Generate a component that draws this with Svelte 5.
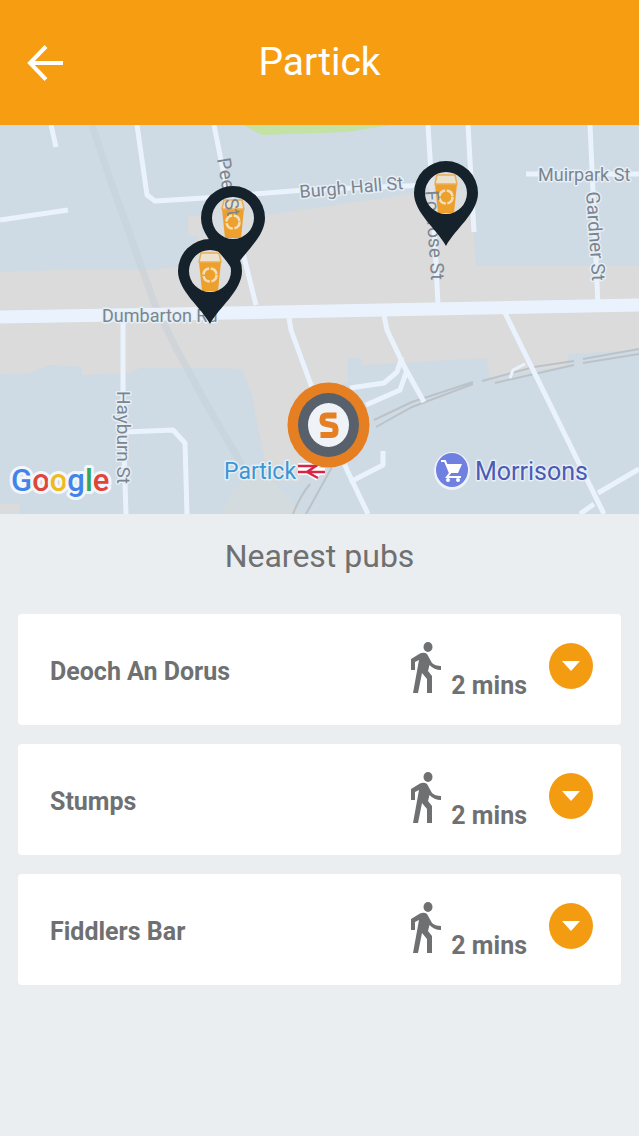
<script>
    const station = 'Partick';

    const pubs = [
        { name: 'Deoch An Dorus', walk: '2 mins' },
        { name: 'Stumps', walk: '2 mins' },
        { name: 'Fiddlers Bar', walk: '2 mins' }
    ];

    const pins = [
        { id: 'dorus', x: 233, y: 218 },
        { id: 'stumps', x: 210, y: 271 },
        { id: 'fiddlers', x: 446, y: 193 }
    ];

    let open = $state(-1);

    function toggle(i) {
        open = open === i ? -1 : i;
    }
</script>

<header>
    <button class="back" type="button" aria-label="Back">
        <svg viewBox="0 0 36 36" aria-hidden="true">
            <path d="M19 1.500L3 18l16 16.500M3 18h33" />
        </svg>
    </button>
    <h1>{station}</h1>
</header>

<main>
    <svg class="map" viewBox="0 125 639 389" preserveAspectRatio="xMidYMid slice" role="img" aria-label="Map of {station}">
        <rect y="125" width="639" height="389" fill="#cedae4" />

        <!-- built up areas -->
        <g fill="#dadbda">
            <path d="M0 272l85-3 65 1 30-3V260l20-25 30-15 70-10 110-16 54-4 10 40 2 36h163v55H0z" />
            <path d="M188 216h14v20h-14z" />
            <path d="M0 310l639-8v48l-70 4-4 12-75 12-4-20-138 8v16l-20 9-14 44-14 46h-30l-12-51-6-35-10-26-42-1-60 0-10 5-48 2v-8l-32-2-20 8-40 2-8 10-22 4H0z" />
            <path d="M0 504h20v10H0z" />
        </g>
        <path d="M348 358h13l1 18h-14z" fill="#cedae4" />
        <path d="M222 514l14-28 24-18 44 46z" fill="#d3dbde" />
        <path d="M243 125h148l-45 7-84 3z" fill="#c4e2a4" />

        <!-- underground line -->
        <path class="tunnel" d="M92 125l20 60 18 50 25 70 22 45 30 55 35 60" />

        <!-- railway -->
        <g class="rail">
            <path d="M376 427l36-20 61-23M374 420l38-18 61-20M482 381l52-14 40-6M495 383l79-18M583 363l56-9M583 359l56-10" />
            <path d="M293 514q7-18 17-30M306 514l26-47" />
        </g>

        <g class="road">
            <path d="M51 125l5 22M0 220l68-10M137 125l10 70 8 6 50-3 100-8 125-5" />
            <path d="M214 125l12 60 30 120" />
            <path d="M428 125l5 80 5 100M468 125l6 107M590 125l8 180" />
            <path d="M526 174h113" />
            <path d="M123 320v100l3 94M126 432l47-2 12 13 2 71" />
            <path d="M289 318l2 12 20 55 36 85 21 44" />
            <path d="M384 315l3 15 17 36 20 36M350 388l34-5 13-11 5-15M366 405l34-15 7-20" />
            <path d="M350 482l33-17v-14M505 313l99 201M598 493l41-24M580 514l14-10" />
            <path d="M525 364l-12 6-3 8" stroke-width="3" />
        </g>
        <path d="M0 317L230 313 639 305" stroke="#eaf3fd" stroke-width="13" fill="none" />

        {#each pins as pin (pin.id)}
        <g transform="translate({pin.x} {pin.y})">
            <circle r="22" fill="#dddedf" opacity="0.7" />
            <g opacity="0.9">
                <path d="M-11-9h22l-3 29h-16z" fill="#f09a1a" />
                <path d="M-9-18h18l2 9h-22z" fill="#eee3cd" stroke="#f0ab45" stroke-width="1.500" />
                <circle cy="4" r="6.500" fill="none" stroke="#f6dfb8" stroke-width="2.500" stroke-dasharray="8.500 1.700" />
            </g>
        </g>
        {/each}

        <!-- names run across the pin windows, under the pin bodies -->
        <g class="street">
            <text x="102" y="322">Dumbarton Rd</text>
            <text transform="translate(300 198) rotate(-5)">Burgh Hall St</text>
            <text x="538" y="181">Muirpark St</text>
        </g>
        <g class="street down">
            <text transform="translate(586 192) rotate(86)">Gardner St</text>
            <text transform="translate(117 391) rotate(90)">Hayburn St</text>
        </g>
        <g class="street down bare">
            <text transform="translate(217 159) rotate(80)">Peel St</text>
            <text transform="translate(425 191) rotate(86)">Foxrose St</text>
        </g>

        {#each pins as pin (pin.id)}
        <path
            transform="translate({pin.x} {pin.y})"
            d="M0 53C-9 36-32 20-32 0a32 32 0 0 1 64 0C32 20 9 36 0 53zM0-21a21 21 0 1 0 0 42 21 21 0 0 0 0-42z"
            fill="#15222b"
            fill-rule="evenodd" />
        {/each}

        <g class="poi">
            <text x="224" y="479" font-size="23" fill="#3b97d3">{station}</text>
            <text x="475" y="480" font-size="25" fill="#4a5bb5">Morrisons</text>
        </g>

        <path d="M298 466h18l-8 5h17M298 472h27M308 472l10 6" stroke="#fff" stroke-width="6" fill="none" />
        <path d="M298 466h18l-9 6 11 6M298 472h27" stroke="#d92445" stroke-width="2.500" fill="none" />

        <ellipse cx="328.500" cy="425" rx="41" ry="42.500" fill="#e67e22" />
        <ellipse cx="328.500" cy="425" rx="30.500" ry="32" fill="#57606b" />
        <ellipse cx="328.500" cy="425" rx="20.500" ry="22" fill="#eff3f8" />
        <path d="M336.500 415.500h-10q-4 0-4 4v1q0 3 4 3.500l5 1q4 .500 4 4v2q0 4-4 4h-11" fill="none" stroke="#e67e22" stroke-width="6" />

        <ellipse cx="452" cy="471" rx="18" ry="19" fill="#eef3fb" />
        <ellipse cx="452" cy="470" rx="16" ry="17" fill="#6f80e0" />
        <path d="M441 461h4l5 12-3 4h14" fill="none" stroke="#fff" stroke-width="2" />
        <path d="M446 464h16l-4 9h-8z" fill="#fff" />
        <circle cx="448" cy="480" r="2" fill="#fff" />
        <circle cx="458" cy="480" r="2" fill="#fff" />

        <text class="brand" x="11" y="491"><tspan fill="#4285e8">G</tspan><tspan fill="#e0453a">o</tspan><tspan fill="#efb920">o</tspan><tspan fill="#4285e8">g</tspan><tspan fill="#38a455">l</tspan><tspan fill="#e0453a">e</tspan></text>
    </svg>

    <h2>Nearest pubs</h2>

    <ul>
        {#each pubs as pub, i (pub.name)}
        <li>
            <span class="name">{pub.name}</span>
            <svg class="walker" viewBox="0 0 30 52" aria-hidden="true">
                <ellipse cx="17" cy="5" rx="4.500" ry="5" />
                <path d="M9 11.500Q13 10 16 12L21 21Q24 24 30 24v4Q23 28 18.500 23L17 29l4 5v17h-5V37l-5-6-4 20H2l6-33-4 2v8H0V17z" />
            </svg>
            <span class="time">{pub.walk}</span>
            <button
                class="toggle"
                type="button"
                aria-label="Show {pub.name}"
                aria-expanded={open === i}
                onclick={() => toggle(i)}>
                <svg viewBox="0 0 18 10" aria-hidden="true"><path d="M0 0h18L9 10z" /></svg>
            </button>
        </li>
        {/each}
    </ul>
</main>

<style>
    :global(body) {
        margin: 0;
        background-color: #ebeef0;
        color: #6f7072;
        font-family: Roboto, sans-serif;
    }

    header {
        display: grid;
        grid-template-columns: 36px 1fr 36px;
        align-items: center;
        padding: 32px 27px;
        background-color: #f79d12;
        color: #fff;
    }

    h1 {
        margin: 0;
        font-size: 39px;
        font-weight: 400;
        line-height: 61px;
        text-align: center;
    }

    button {
        padding: 0;
        border: none;
        cursor: pointer;
    }

    .back {
        height: 36px;
        background: none;
    }

    .back svg {
        display: block;
        width: 36px;
        height: 36px;
        fill: none;
        stroke: #fff;
        stroke-width: 4;
    }

    .map {
        display: block;
        width: 100%;
    }

    .road {
        fill: none;
        stroke: #eaf3fd;
        stroke-width: 5;
        stroke-linejoin: round;
    }

    .rail {
        fill: none;
        stroke: #bcc3c8;
        stroke-width: 2;
    }

    .tunnel {
        fill: none;
        stroke: #c3ced8;
        stroke-width: 7;
        opacity: 0.4;
    }

    .street text,
    .poi text,
    .brand {
        paint-order: stroke;
        stroke: #e6eef6;
        stroke-width: 3;
        stroke-linejoin: round;
    }

    .street {
        font-size: 18px;
        fill: #7a858f;
    }

    .street.down {
        font-size: 19px;
    }

    .street.bare text {
        stroke: none;
    }

    .brand {
        font-size: 31px;
        font-weight: 500;
        stroke: #f3f6fa;
        stroke-width: 6;
    }

    h2 {
        margin: 0;
        padding: 21px 0 37px;
        font-size: 32px;
        font-weight: 400;
        line-height: 42px;
        text-align: center;
    }

    ul {
        display: grid;
        gap: 19px;
        margin: 0;
        padding: 0 18px;
        list-style: none;
    }

    li {
        display: flex;
        align-items: flex-start;
        padding: 28px 28px 26px 32px;
        border-radius: 4px;
        background-color: #fff;
        font-size: 25px;
        font-weight: 700;
        line-height: 27px;
    }

    .name {
        flex: 1;
        padding-top: 16px;
    }

    .walker {
        width: 30px;
        height: 52px;
        margin-right: 10px;
        fill: #6f7072;
    }

    .time {
        padding-top: 30px;
    }

    .toggle {
        display: grid;
        place-items: center;
        width: 44px;
        height: 46px;
        margin: 1px 0 0 22px;
        border-radius: 50%;
        background-color: #f39c12;
    }

    .toggle svg {
        width: 18px;
        height: 10px;
        fill: #fff;
    }
</style>
